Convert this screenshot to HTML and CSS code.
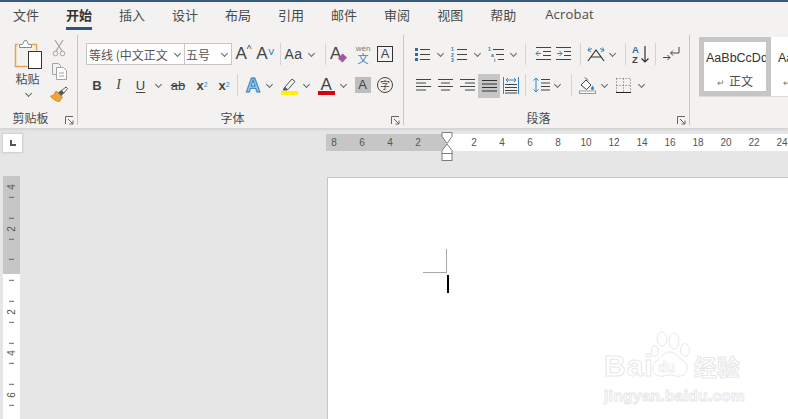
FILE: index.html
```html
<!DOCTYPE html>
<html lang="zh-CN">
<head>
  <meta charset="UTF-8">
  <meta name="viewport" content="width=device-width, initial-scale=1.0">
  <title>Word</title>
  <link rel="stylesheet" href="styles.css">
</head>
<body>
  <nav class="tabs">
    <span class="tab">文件</span>
    <span class="tab active">开始</span>
    <span class="tab">插入</span>
    <span class="tab">设计</span>
    <span class="tab">布局</span>
    <span class="tab">引用</span>
    <span class="tab">邮件</span>
    <span class="tab">审阅</span>
    <span class="tab">视图</span>
    <span class="tab">帮助</span>
    <span class="tab latin">Acrobat</span>
  </nav>

  <section class="ribbon">
    <!-- clipboard -->
    <div class="group clip">
      <div class="clip-tools">
        <div class="paste">
          <svg width="30" height="31" viewBox="15 39 30 31">
            <path d="M19 44.500h-2.500v22h12" fill="none" stroke="#e9a545" stroke-width="1.500"/>
            <path d="M33 44.500h4.500v6" fill="none" stroke="#e9a545" stroke-width="1.500"/>
            <path d="M20.500 47.500v-3h3l2-4h2l2 4h3v3z" fill="#fff" stroke="#8a8a8a"/>
            <rect x="29.500" y="51.500" width="13" height="17" fill="#fff" stroke="#333"/>
          </svg>
          <span class="paste-label">粘贴</span>
          <i class="chev"></i>
        </div>
        <div class="clip-small">
          <svg width="14" height="18" viewBox="0 0 14 18">
            <path d="M3 1l7 11M11 1L4 12" stroke="#a3a3a3" fill="none" stroke-width="1.200"/>
            <circle cx="3.500" cy="14.500" r="2.300" fill="none" stroke="#a3a3a3"/>
            <circle cx="10.500" cy="14.500" r="2.300" fill="none" stroke="#a3a3a3"/>
          </svg>
          <svg width="17" height="17" viewBox="0 0 17 17">
            <path d="M5.500 11.500h-4v-11h6l2 2v2" fill="#f3f2f1" stroke="#a3a3a3"/>
            <path d="M5.500 4.500h7l3 3v9h-10z" fill="#fff" stroke="#a3a3a3"/>
            <path d="M8 10h5M8 13h5" stroke="#a3a3a3"/>
          </svg>
          <svg width="18" height="17" viewBox="0 0 18 17">
            <path d="M11 5l5-4 1.500 1.500-4 5z" fill="#fff" stroke="#555"/>
            <path d="M6 5l6.500 6-3 4.500c-3 0-7-2-9-5.500 2.500 0 4-2 5.500-5z" fill="#eea63c" stroke="#c9801d" stroke-width=".8"/>
            <path d="M8 6.500l3.500-2.500 2.500 2.500-2.500 3.500z" fill="#555"/>
          </svg>
        </div>
      </div>
      <div class="group-foot">
        <span class="group-label">剪贴板</span>
        <span class="launcher"><svg width="9" height="9" viewBox="0 0 9 9"><path d="M.5 8V.5H8M3 3l5 5M8 4.500V8H4.500" fill="none" stroke="#666"/></svg></span>
      </div>
    </div>
    <div class="vsep"></div>

    <!-- font -->
    <div class="group font">
      <div class="rows">
        <div class="row">
          <span class="select font-name">等线 (中文正文<i class="chev"></i></span>
          <span class="select font-size">五号<i class="chev"></i></span>
          <span class="t w1"></span>
          <span class="t w21 big-a">A<sup class="caret">^</sup></span>
          <span class="t w23 big-a">A<sup class="caret blue">˅</sup></span>
          <span class="t w3"></span><i class="sep"></i>
          <span class="t w25 case">Aa</span><i class="chev w10"></i>
          <span class="t w9"></span><i class="sep"></i>
          <span class="t w26">
            <svg width="18" height="20" viewBox="0 0 18 20">
              <text x="0" y="15" class="svg-a">A</text>
              <path d="M12.500 9.500l4.500 4-4.500 5-4.500-4z" fill="#a6569f"/>
            </svg>
          </span>
          <span class="t w22 wen"><small>wén</small><b>文</b></span>
          <span class="t w22"><span class="boxed-a">A</span></span>
        </div>
        <div class="row">
          <span class="t w22 bold">B</span>
          <span class="t w21 ital">I</span>
          <span class="t w23 under">U</span><i class="chev w12"></i>
          <span class="t w28 strike">ab</span>
          <span class="t w20 script">x<sub>2</sub></span>
          <span class="t w24 script">x<sup>2</sup></span>
          <span class="t w1"></span><i class="sep"></i>
          <span class="t w4"></span>
          <span class="t w22 effect-a">A</span><i class="chev w10"></i>
          <span class="t w4"></span>
          <span class="t w22">
            <svg width="17" height="19" viewBox="0 0 17 19">
              <path d="M4 11l7-8 3 2.500-7 8H3.500z" fill="none" stroke="#555"/>
              <path d="M2 13l2-2 3 2.500-1.500 1H2z" fill="#555"/>
              <rect x="0" y="15" width="17" height="4" fill="#ffef00"/>
            </svg>
          </span>
          <i class="chev w12"></i>
          <span class="t w2"></span>
          <span class="t w24">
            <svg width="17" height="19" viewBox="0 0 17 19">
              <text x="2.500" y="13.500" class="svg-a">A</text>
              <rect x="0" y="15" width="17" height="4" fill="#d9000f"/>
            </svg>
          </span>
          <i class="chev w10"></i>
          <span class="t w29"><span class="shade-a">A</span></span>
          <span class="t w16"><span class="circled">字</span></span>
        </div>
      </div>
      <div class="group-foot">
        <span class="group-label">字体</span>
        <span class="launcher"><svg width="9" height="9" viewBox="0 0 9 9"><path d="M.5 8V.5H8M3 3l5 5M8 4.500V8H4.500" fill="none" stroke="#666"/></svg></span>
      </div>
    </div>
    <div class="vsep"></div>

    <!-- paragraph -->
    <div class="group para">
      <div class="rows">
        <div class="row">
          <span class="t w24">
            <svg width="16" height="16" viewBox="0 0 16 16">
              <path d="M1 2h3v3H1zM1 7h3v3H1zM1 12h3v3H1z" fill="#2f6f9f"/>
              <path d="M6 3.500h10M6 8.500h10M6 13.500h10" stroke="#444"/>
            </svg>
          </span><i class="chev w12"></i>
          <span class="t w25">
            <svg width="16" height="16" viewBox="0 0 16 16">
              <text x="0" y="5" class="svg-num">1</text><text x="0" y="10.500" class="svg-num">2</text><text x="0" y="16" class="svg-num">3</text>
              <path d="M6 3.500h10M6 8.500h10M6 13.500h10" stroke="#444"/>
            </svg>
          </span><i class="chev w12"></i>
          <span class="t w25">
            <svg width="16" height="16" viewBox="0 0 16 16">
              <text x="0" y="5" class="svg-num">1</text><text x="3" y="10.500" class="svg-num">a</text><text x="6" y="16" class="svg-num">i</text>
              <path d="M5 3.500h11M8 8.500h8M10 13.500h6" stroke="#444"/>
            </svg>
          </span><i class="chev w11"></i>
          <span class="t w6"></span><i class="sep"></i>
          <span class="t w4"></span>
          <span class="t w25">
            <svg width="16" height="14" viewBox="0 0 16 14">
              <path d="M1 .500h15M8 4.500h8M8 8.500h8M1 12.500h15" stroke="#444"/>
              <path d="M6 6.500H1M3.500 4L1 6.500 3.500 9" fill="none" stroke="#2f86c5"/>
            </svg>
          </span>
          <span class="t w18">
            <svg width="16" height="14" viewBox="0 0 16 14">
              <path d="M0 .500h15M8 4.500h7M8 8.500h7M0 12.500h15" stroke="#444"/>
              <path d="M1 6.500h5M3.500 4L6 6.500 3.500 9" fill="none" stroke="#2f86c5"/>
            </svg>
          </span>
          <span class="t w7"></span><i class="sep"></i>
          <span class="t w3"></span>
          <span class="t w24">
            <svg width="20" height="16" viewBox="0 0 20 16">
              <path d="M2 15L10 4l8 11M5 11h10" fill="none" stroke="#333" stroke-width="1.200"/>
              <path d="M6 2.500L2 4.500M3.500 1.500L2 4.500l3 1M14 2.500l4 2M16.500 1.500l1.500 3-3 1" fill="none" stroke="#2f86c5"/>
            </svg>
          </span><i class="chev w8"></i>
          <span class="t w9"></span><i class="sep"></i>
          <span class="t w4"></span>
          <span class="t w20 sort">
            <svg width="17" height="20" viewBox="0 0 17 20">
              <text x="0" y="9" class="svg-az blue-fill">A</text>
              <text x="0" y="19" class="svg-az">Z</text>
              <path d="M13 2v16M9.500 14.500L13 18l3.500-3.500" fill="none" stroke="#333" stroke-width="1.200"/>
            </svg>
          </span>
          <span class="t w5"></span><i class="sep"></i>
          <span class="t w30">
            <svg width="18" height="16" viewBox="0 0 18 16">
              <path d="M17 1v6h-8M11 4.500L8.500 7 11 9.500" fill="none" stroke="#444"/>
              <path d="M1 11.500h7M5.500 9L8 11.500 5.500 14" fill="none" stroke="#444"/>
            </svg>
          </span>
        </div>
        <div class="row">
          <span class="t w2"></span>
          <span class="t w22"><svg width="15" height="14" viewBox="0 0 15 14"><path d="M0 1.500h15M0 5h10M0 8.500h15M0 12h10" stroke="#444"/></svg></span>
          <span class="t w23"><svg width="15" height="14" viewBox="0 0 15 14"><path d="M0 1.500h15M3 5h9M0 8.500h15M3 12h9" stroke="#444"/></svg></span>
          <span class="t w21"><svg width="15" height="14" viewBox="0 0 15 14"><path d="M0 1.500h15M5 5h10M0 8.500h15M5 12h10" stroke="#444"/></svg></span>
          <span class="t w22 pressed"><svg width="15" height="14" viewBox="0 0 15 14"><path d="M0 1.500h15M0 5h15M0 8.500h15M0 12h15" stroke="#333"/></svg></span>
          <span class="t w22">
            <svg width="16" height="17" viewBox="0 0 16 17">
              <path d="M.5 0v17M15.500 0v17" stroke="#2f86c5"/>
              <path d="M3 3h10M5 1l-2 2 2 2M11 1l2 2-2 2" fill="none" stroke="#2f86c5"/>
              <path d="M2 7.500h12M2 10.500h12M2 13.500h12M2 16h12" stroke="#444"/>
            </svg>
          </span>
          <span class="t w3"></span><i class="sep"></i>
          <span class="t w4"></span>
          <span class="t w22">
            <svg width="17" height="16" viewBox="0 0 17 16">
              <path d="M3 1v14M.5 3.500L3 1l2.500 2.500M.5 12.500L3 15l2.500-2.500" fill="none" stroke="#2f86c5"/>
              <path d="M8 2.500h9M8 6h9M8 9.500h9M8 13h9" stroke="#444"/>
            </svg>
          </span><i class="chev w10"></i>
          <span class="t w9"></span><i class="sep"></i>
          <span class="t w3"></span>
          <span class="t w24">
            <svg width="17" height="18" viewBox="0 0 17 18">
              <path d="M2 9l5-5 5 5-4.500 4.500z" fill="#fff" stroke="#444"/>
              <path d="M6 1.500l3 3" stroke="#444"/>
              <path d="M13.500 9.500c1 1.500 1.500 2 1.500 3a1.400 1.400 0 01-3 0c0-1 .7-1.500 1.500-3z" fill="#2f86c5"/>
              <rect x=".5" y="15" width="16" height="2.500" fill="#fff" stroke="#999"/>
            </svg>
          </span><i class="chev w10"></i>
          <span class="t w29">
            <svg width="15" height="15" viewBox="0 0 15 15">
              <path d="M.5 .5h14v14M.5 .5v14M7.500 .5v14M.5 7.500h14" fill="none" stroke="#666" stroke-dasharray="1 2"/>
              <path d="M0 14.500h15" stroke="#222"/>
            </svg>
          </span><i class="chev w6"></i>
        </div>
      </div>
      <div class="group-foot">
        <span class="group-label">段落</span>
        <span class="launcher"><svg width="9" height="9" viewBox="0 0 9 9"><path d="M.5 8V.5H8M3 3l5 5M8 4.500V8H4.500" fill="none" stroke="#666"/></svg></span>
      </div>
    </div>
    <div class="vsep"></div>

    <!-- styles -->
    <div class="group styles">
      <div class="gallery">
        <div class="style-card selected">
          <span class="sample">AaBbCcDd</span>
          <span class="style-name"><em>↵</em>正文</span>
        </div>
        <div class="style-card">
          <span class="sample">AaBbCcDd</span>
          <span class="style-name"><em>↵</em>无间隔</span>
        </div>
      </div>
    </div>
  </section>

  <main class="workspace">
    <aside class="side">
      <div class="tab-stop"><span class="stop-mark"></span></div>
      <div class="vruler">
        <span class="vcell">4</span><span class="vcell"></span>
        <span class="vcell">2</span><span class="vcell"></span>
        <span class="vcell"></span><span class="vcell"></span>
        <span class="vcell">2</span><span class="vcell"></span>
        <span class="vcell">4</span><span class="vcell"></span>
        <span class="vcell">6</span><span class="vcell"></span>
      </div>
    </aside>
    <div class="doc-area">
      <div class="hruler">
        <div class="hr-margin">
          <span class="hcell">8</span><span class="hcell">6</span><span class="hcell">4</span><span class="hcell">2</span>
        </div>
        <div class="hr-text">
          <span class="hcell">2</span><span class="hcell">4</span><span class="hcell">6</span><span class="hcell">8</span>
          <span class="hcell">10</span><span class="hcell">12</span><span class="hcell">14</span><span class="hcell">16</span>
          <span class="hcell">18</span><span class="hcell">20</span><span class="hcell">22</span><span class="hcell">24</span>
        </div>
      </div>
      <div class="page">
        <div class="crop-mark"></div>
        <div class="caret-line"></div>
      </div>
    </div>

    <!-- indent handles sit over the ruler -->
    <svg class="indent" width="12" height="29" viewBox="0 0 12 29">
      <path d="M1 .5h10v4l-5 7-5-7z" fill="#fff" stroke="#7c7c7c"/>
      <path d="M6 12l5 6.500v3H1v-3z" fill="#fff" stroke="#7c7c7c"/>
      <rect x="1" y="21.500" width="10" height="7" fill="#fff" stroke="#7c7c7c"/>
    </svg>

    <!-- watermark over the page -->
    <div class="watermark">
      <div class="wm-top">
        <span class="wm-bai">Bai</span>
        <svg class="wm-paw" width="42" height="50" viewBox="0 0 42 50">
          <ellipse cx="11" cy="8" rx="5" ry="7" fill="#fff" stroke="#e8e8e8"/>
          <ellipse cx="23" cy="10" rx="5" ry="8" fill="#fff" stroke="#e8e8e8"/>
          <ellipse cx="34" cy="19" rx="4.500" ry="6.500" fill="#fff" stroke="#e8e8e8"/>
          <ellipse cx="4" cy="20" rx="3.500" ry="5.500" fill="#fff" stroke="#e8e8e8"/>
          <path d="M19 21c6 0 8 6 14 9 5 3 4 14-3 15-5 1-7-1-11-1s-7 2-11 1c-7-1-8-10-4-14 5-3 8-10 15-10z" fill="#fff" stroke="#e8e8e8"/>
          <text x="7" y="41" class="wm-du">du</text>
        </svg>
        <span class="wm-cn">经验</span>
      </div>
      <div class="wm-url">jingyan.baidu.com</div>
    </div>
  </main>
</body>
</html>
```
FILE: styles.css
```css
* {
  box-sizing: border-box;
}

html,
body {
  margin: 0;
  height: 100%;
}

body {
  font-family: "Noto Sans CJK SC", "Noto Sans", sans-serif;
  color: #444;
  background: #e6e6e6;
  overflow: hidden;
  display: flex;
  flex-direction: column;
  position: relative;
}

/* tabs */
.tabs {
  height: 30px;
  flex: none;
  display: flex;
  gap: 27px;
  padding-left: 13px;
  background: #f3f2f1;
  border-top: 2px solid #37597f;
}

.tab {
  font-size: 13px;
  line-height: 25px;
  height: 28px;
  color: #4a4a4a;
}

.tab.active {
  font-weight: 700;
  color: #333;
  border-bottom: 3px solid #2b5487;
}

.tab.latin {
  font-family: "Open Sans", sans-serif;
  letter-spacing: .2px;
  margin-left: 2px;
}

/* ribbon */
.ribbon {
  height: 98px;
  flex: none;
  display: flex;
  background: #f3f2f1;
  box-shadow: 0 2px 2px #d4d4d4;
  position: relative;
}

.vsep {
  width: 1px;
  margin: 5px 0 3px;
  background: #c8c6c4;
}

.group {
  display: flex;
  flex-direction: column;
  flex: none;
}

.clip {
  width: 77px;
}

.font {
  width: 325px;
  padding-left: 8px;
}

.para {
  width: 285px;
  padding-left: 6px;
}

.styles {
  flex: 1;
  padding: 7px 0 0 9px;
  overflow: hidden;
}

.rows {
  padding-top: 13px;
  display: flex;
  flex-direction: column;
  gap: 9px;
}

.row {
  height: 22px;
  display: flex;
  align-items: center;
}

.group-foot {
  margin-top: auto;
  height: 20px;
  display: flex;
  align-items: center;
}

.font .group-foot {
  margin-left: -8px;
}

.para .group-foot {
  margin-left: -6px;
}

.group-label {
  flex: 1;
  text-align: center;
  font-size: 12px;
  line-height: 20px;
  color: #4a4a4a;
}

.launcher {
  width: 16px;
  display: flex;
  justify-content: center;
  padding-top: 5px;
}

.t {
  flex: none;
  height: 22px;
  display: flex;
  align-items: center;
  justify-content: center;
}

.w1 { width: 1px; }
.w2 { width: 2px; }
.w3 { width: 3px; }
.w4 { width: 4px; }
.w5 { width: 5px; }
.w6 { width: 6px; }
.w7 { width: 7px; }
.w8 { width: 8px; }
.w9 { width: 9px; }
.w10 { width: 10px; }
.w11 { width: 11px; }
.w12 { width: 12px; }
.w16 { width: 16px; }
.w18 { width: 18px; }
.w20 { width: 20px; }
.w21 { width: 21px; }
.w22 { width: 22px; }
.w23 { width: 23px; }
.w24 { width: 24px; }
.w25 { width: 25px; }
.w26 { width: 26px; }
.w28 { width: 28px; }
.w29 { width: 29px; }
.w30 { width: 30px; }

.chev {
  flex: none;
  display: flex;
  justify-content: center;
  align-items: center;
  height: 10px;
}

.chev::before {
  content: "";
  width: 4px;
  height: 4px;
  margin-top: -2px;
  border-right: 1px solid #666;
  border-bottom: 1px solid #666;
  transform: rotate(45deg);
}

.sep {
  flex: none;
  width: 1px;
  height: 22px;
  background: #d6d4d2;
}

/* clipboard */
.clip-tools {
  display: flex;
  padding: 9px 0 0 6px;
}

.paste {
  width: 46px;
  display: flex;
  flex-direction: column;
  align-items: center;
}

.paste-label {
  font-size: 12px;
  line-height: 18px;
  margin-left: -3px;
  color: #4a4a4a;
}

.paste .chev {
  margin-top: 1px;
  margin-left: -2px;
}

.clip-small {
  width: 14px;
  display: flex;
  flex-direction: column;
  align-items: center;
  gap: 6px;
}

/* font group */
.select {
  flex: none;
  height: 22px;
  display: flex;
  align-items: center;
  justify-content: space-between;
  background: #fff;
  border: 1px solid #c8c6c4;
  font-size: 12px;
  padding: 0 2px;
  color: #555;
}

.select .chev {
  width: 9px;
}

.font-name {
  width: 99px;
  white-space: nowrap;
}

.font-size {
  width: 48px;
  margin-left: -1px;
  padding-left: 1px;
}

.big-a {
  font-family: "Liberation Sans", sans-serif;
  font-size: 17px;
  color: #444;
}

.caret {
  font-size: 10px;
  line-height: 0;
  margin-top: -8px;
}

.caret.blue {
  color: #2f86c5;
  margin-top: -2px;
  font-size: 12px;
}

.case {
  font-family: "Liberation Sans", sans-serif;
  font-size: 14px;
  letter-spacing: .5px;
}

.svg-a {
  font-family: "Liberation Sans", sans-serif;
  font-size: 17px;
  fill: #444;
}

.wen {
  flex-direction: column;
}

.wen small {
  font-family: "Liberation Sans", sans-serif;
  font-size: 8px;
  line-height: 8px;
  color: #777;
}

.wen b {
  font-size: 11px;
  line-height: 11px;
  font-weight: 400;
  color: #2f86c5;
}

.boxed-a {
  width: 16px;
  height: 16px;
  border: 1px solid #333;
  font: 13px/14px "Liberation Sans", sans-serif;
  text-align: center;
  color: #444;
}

.bold,
.ital,
.under,
.strike,
.script {
  font-family: "Liberation Sans", sans-serif;
  color: #444;
}

.bold {
  font-size: 13px;
  font-weight: 700;
}

.ital {
  font-family: "Liberation Serif", serif;
  font-size: 14px;
  font-style: italic;
}

.under {
  font-size: 13px;
  text-decoration: underline;
  text-underline-offset: 2px;
}

.strike {
  font-size: 13px;
  text-decoration: line-through;
}

.script {
  font-size: 13px;
  font-weight: 700;
}

.script sub,
.script sup {
  font-size: 7px;
  font-weight: 400;
  color: #2f86c5;
  line-height: 0;
}

.effect-a {
  font: 700 20px "Liberation Sans", sans-serif;
  color: #9fd0f2;
  -webkit-text-stroke: 1px #2f7fbd;
}

.shade-a {
  width: 16px;
  height: 16px;
  background: #bdbdbd;
  text-align: center;
  font: 13px/16px "Liberation Sans", sans-serif;
  color: #444;
}

.circled {
  width: 16px;
  height: 16px;
  border: 1px solid #444;
  border-radius: 50%;
  font-size: 10px;
  line-height: 13px;
  text-align: center;
}

/* paragraph group */
.svg-num {
  font: 700 5px "Liberation Sans", sans-serif;
  fill: #2f6f9f;
}

.svg-az {
  font: 700 9.500px "Liberation Sans", sans-serif;
  fill: #444;
}

.blue-fill {
  fill: #2f6f9f;
}

.pressed {
  height: 24px;
  margin-top: 2px;
  background: #c6c6c6;
}

/* styles gallery */
.gallery {
  height: 60px;
  display: flex;
  border-bottom: 1px solid #dcdcdc;
}

.style-card {
  width: 72px;
  flex: none;
  height: 59px;
  background: #fff;
  border: 5px solid #fff;
  display: flex;
  flex-direction: column;
  align-items: center;
  overflow: hidden;
}

.style-card.selected {
  border-color: #c6c6c6;
}

.sample {
  width: 62px;
  padding-left: 2px;
  margin-top: 7px;
  overflow: hidden;
  white-space: nowrap;
  font: 12.500px/18px "Liberation Sans", sans-serif;
  color: #333;
}

.style-name {
  margin-top: 6px;
  font-size: 12px;
  line-height: 16px;
  white-space: nowrap;
  color: #4a4a4a;
}

.style-name em {
  font-style: normal;
  font-size: 9px;
  margin-right: 4px;
  color: #777;
}

/* work area */
.workspace {
  flex: 1;
  display: flex;
  min-height: 0;
  position: relative;
}

.side {
  width: 326px;
  flex: none;
  padding: 5px 0 0 2px;
}

.tab-stop {
  width: 21px;
  height: 20px;
  background: #fff;
  border: 1px solid #d4d4d4;
  box-shadow: 0 0 2px #ccc;
  display: flex;
  align-items: center;
  justify-content: center;
}

.stop-mark {
  width: 6px;
  height: 6px;
  border-left: 2px solid #555;
  border-bottom: 2px solid #555;
}

.vruler {
  width: 17px;
  margin: 23px 0 0 1px;
  height: 244px;
  padding-top: 1px;
  background: linear-gradient(#c6c6c6 98px, #fff 98px);
  display: flex;
  flex-direction: column;
  overflow: hidden;
}

/* rotated half a turn on top of vertical-lr, so digits read bottom to top */
.vcell {
  height: 20.800px;
  flex: none;
  display: flex;
  align-items: center;
  justify-content: center;
  font: 10px "Liberation Sans", sans-serif;
  color: #555;
  writing-mode: vertical-lr;
  transform: rotate(180deg);
  background: linear-gradient(#666, #666) center top / 5px 1px no-repeat;
}

.doc-area {
  flex: 1;
  min-width: 0;
  display: flex;
  flex-direction: column;
  overflow: hidden;
}

.hruler {
  height: 17px;
  margin-top: 6px;
  flex: none;
  display: flex;
}

.hr-margin {
  width: 120px;
  flex: none;
  padding-right: 14px;
  background: #c6c6c6;
  display: flex;
  justify-content: flex-end;
  overflow: hidden;
}

.hr-text {
  flex: 1;
  padding-left: 14px;
  background: #fff;
  display: flex;
}

.hcell {
  width: 28px;
  flex: none;
  text-align: center;
  font: 10px/17px "Liberation Sans", sans-serif;
  color: #555;
}

.page {
  margin: 26px 0 0 1px;
  flex: 1;
  background: #fff;
  border-top: 1px solid #c6c6c6;
  border-left: 1px solid #c6c6c6;
}

.crop-mark {
  width: 24px;
  height: 24px;
  margin: 71px 0 0 95px;
  border-right: 1px solid #a8a8a8;
  border-bottom: 1px solid #a8a8a8;
}

.caret-line {
  width: 2px;
  height: 18px;
  margin: 2px 0 0 119px;
  background: #000;
}

.indent {
  position: absolute;
  left: 441px;
  top: 4px;
}

/* watermark */
.watermark {
  position: absolute;
  left: 604px;
  top: 203px;
  width: 145px;
}

.wm-top {
  display: flex;
  align-items: flex-end;
}

.wm-bai,
.wm-url,
.wm-cn {
  color: #fff;
  -webkit-text-stroke: 1px #e8e8e8;
}

.wm-bai {
  font: 700 30px/30px "Liberation Sans", sans-serif;
  letter-spacing: 1px;
}

.wm-paw {
  margin-left: -3px;
}

.wm-du {
  font: 700 14px "Liberation Sans", sans-serif;
  fill: #fff;
  stroke: #e8e8e8;
  stroke-width: .6px;
}

.wm-cn {
  font-size: 23px;
  font-weight: 700;
  line-height: 30px;
  margin-left: 1px;
}

.wm-url {
  font: 700 15.500px/20px "Liberation Sans", sans-serif;
  margin-top: 5px;
  letter-spacing: .3px;
}
```
